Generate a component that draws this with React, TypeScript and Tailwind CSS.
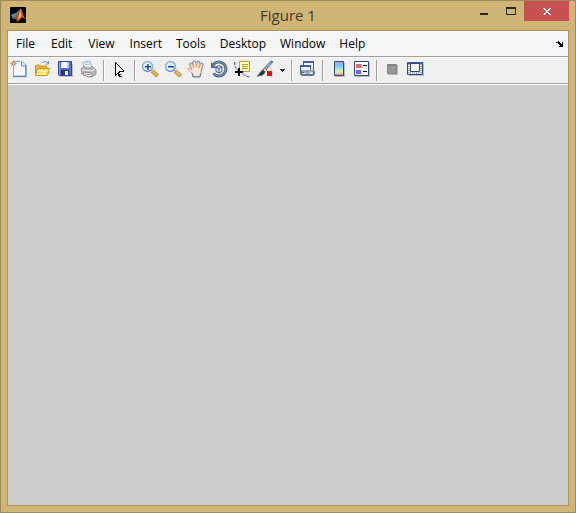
import type { ReactNode } from "react";

const menus = [
  { label: "File", padding: "px-2" },
  { label: "Edit", padding: "px-2" },
  { label: "View", padding: "px-2" },
  { label: "Insert", padding: "px-[7px]" },
  { label: "Tools", padding: "px-[7px]" },
  { label: "Desktop", padding: "px-[7px]" },
  { label: "Window", padding: "px-[7px]" },
  { label: "Help", padding: "px-[7px]" },
];

function Icon({ children }: { children: ReactNode }) {
  return (
    <svg viewBox="0 0 18 18" className="size-[18px] shrink-0" fill="none" aria-hidden="true">
      {children}
    </svg>
  );
}

function Tool({ label, disabled, children }: { label: string; disabled?: boolean; children: ReactNode }) {
  return (
    <button type="button" aria-label={label} title={label} disabled={disabled} className="flex h-6 w-[23px] shrink-0 items-start pt-0.5 pl-0.5">
      <Icon>{children}</Icon>
    </button>
  );
}

function Separator() {
  return (
    <div className="flex h-6 w-2 shrink-0 items-center justify-center">
      <div className="h-[21px] w-0.5 border-l border-[#a0a0a0] bg-white" />
    </div>
  );
}

function Logo() {
  return (
    <svg viewBox="0 0 16 16" className="size-4 shrink-0" aria-hidden="true">
      <rect width="16" height="16" fill="#000" />
      <path d="M1 8l4-2 3 3-3 2-1 1-2-2z" fill="#458fa6" />
      <path d="M5 6c2 0 3-2 5-4L8 8 7 10z" fill="#6d8186" />
      <path d="M4 12l3-4c1-1 2-4 3-6l1 1 1 5-2 3-3 4-1-3z" fill="#b84320" />
      <path d="M10 2h1c1 2 2 6 4 10l-3-2-2 2-3 3 2-6z" fill="#f07927" />
      <path d="M10 4l1 5-2 2-1 2 1-5z" fill="#ffc84a" />
      <path d="M11 4l3 7-2-2z" fill="#a62914" />
    </svg>
  );
}

function Magnifier({ plus }: { plus?: boolean }) {
  return (
    <>
      <path d="M11 11l5.500 5" stroke="#a8875f" strokeWidth="4" />
      <path d="M10.500 10.500l5.500 5" stroke="#f4b04c" strokeWidth="2.500" />
      <circle cx="6.500" cy="6.500" r="5" fill="#dff3fd" stroke="#8aafe0" strokeWidth="1.500" />
      <path d="M3 10a5 5 0 0 0 7.500-1" stroke="#638dcc" />
      <path d="M4 6h6v1.500H4z" fill="#204a96" />
      {plus && <path d="M6.200 4h1.500v6H6.200z" fill="#204a96" />}
    </>
  );
}

export default function App() {
  return (
    <main className="flex h-screen flex-col border border-[#9d8a5a] bg-[#cfb676] px-1.5 pb-1.5 font-['Open_Sans','Noto_Sans',sans-serif]">
      <header className="grid h-[29px] shrink-0 grid-cols-[1fr_auto_1fr] items-start">
        <div className="pt-1.5 pl-[3px]"><Logo /></div>
        <h1 className="pt-1 text-[15px] leading-5 text-[#40382d]">Figure 1</h1>
        <div className="flex justify-end">
          <button type="button" aria-label="Minimize" className="flex h-5 w-[27px] items-center justify-center">
            <svg viewBox="0 0 8 10" className="h-2.5 w-2" aria-hidden="true"><path d="M0 7h8v2H0z" fill="#252525" /></svg>
          </button>
          <button type="button" aria-label="Maximize" className="flex h-5 w-[27px] items-center justify-center">
            <svg viewBox="0 0 10 8" className="h-2 w-2.5" aria-hidden="true"><path d="M0 0h10v8H0zM1 2v5h8V2z" fill="#252525" fillRule="evenodd" /></svg>
          </button>
          <button type="button" aria-label="Close" className="flex h-5 w-[45px] items-center justify-center bg-[#c75050]">
            <svg viewBox="0 0 8 7" className="mt-px h-[7px] w-2" aria-hidden="true"><path d="M0 0h2v1h1v1h2V1h1V0h2v1H7v1H6v1H5v1h1v1h1v1h1v1H6V6H5V5H3v1H2v1H0V6h1V5h1V4h1V3H2V2H1V1H0z" fill="#fff" /></svg>
          </button>
        </div>
      </header>

      <section className="flex min-h-0 flex-1 flex-col border border-[#aa945b] bg-[#ccc]">
        <nav className="flex h-[25px] shrink-0 items-center bg-[#f5f6f7] text-xs leading-4 text-black">
          {menus.map(({ label, padding }) => (
            <button type="button" key={label} className={`h-6 ${padding}`}>{label}</button>
          ))}
          <button type="button" aria-label="Dock figure" className="mr-[3px] ml-auto flex h-6 w-2.5 items-center justify-center">
            <svg viewBox="0 0 8 6" className="h-1.5 w-2" aria-hidden="true"><path d="M0 1h2V0h1v1h1v1h1v1h1V1h1v5H3V5h1V4H3V3H2V2H0z" fill="#000" /></svg>
          </button>
        </nav>

        <div role="toolbar" aria-label="Figure toolbar" className="flex h-7 shrink-0 items-center border-y border-[#a0a0a0] bg-[#f0f0f0] shadow-[inset_0_1px_#fff,0_1px_#fff]">
          <Tool label="New figure">
            <path d="M4 2h9.500L17 5.500V17.500H4z" fill="#c5d0e0" />
            <path d="M3.500 1.500H12l3.500 3.500v11h-12z" fill="#f3f9ff" stroke="#8eabd8" />
            <path d="M11.500 2v4H15" fill="#d3e2f7" stroke="#7795c0" />
            <path d="M16 5v11.500H3" stroke="#6681ac" />
            <path d="M3.500 0v7M0 3.500h7M1 1l5 5M6 1L1 6" stroke="#e99a76" strokeWidth=".8" />
            <circle cx="3.500" cy="3.500" r="1.500" fill="#fff5c0" stroke="#dc653e" />
          </Tool>
          <Tool label="Open">
            <path d="M9 3c2-2 4-2 6 0M15.500 1v3h-3" stroke="#6f88b4" />
            <path d="M2.500 15V6l1-1h3l1 1h6v9z" fill="#e6b837" stroke="#c6921c" />
            <path d="M2.500 15.500l2-7H16.500l-2 7z" fill="#ffec97" stroke="#cd991a" />
            <path d="M5 9.500h10M5 12.500h9" stroke="#ffd95c" />
          </Tool>
          <Tool label="Save">
            <path d="M4 4h13v13H4z" fill="#bcc1d2" /><path d="M2.500 1.500h13v14h-12l-1-1z" fill="#5669cf" stroke="#3445a5" />
            <path d="M5 2h8v6H5z" fill="#f7faff" /><path d="M11 2h2v6h-2z" fill="#b8c8e8" />
            <path d="M5 10h8v5H5z" fill="#26366f" /><path d="M9 11h3v4H9z" fill="#eef2fa" />
            <path d="M3.500 2v12" stroke="#8d9ded" />
          </Tool>
          <Tool label="Print">
            <path d="M5 8L4 2l7-1 2 7z" fill="#eef6ff" stroke="#a3bad8" />
            <path d="M6 3l4-1M6 5l5-1" stroke="#a8c3e5" />
            <path d="M2 9l3-3 1 2h6l1-2 4 4v4l-4 3-10-3z" fill="#b5b7b9" stroke="#969696" />
            <path d="M3 10l10 1 3-2" stroke="#f1f1f1" /><path d="M5 12l7 1 2 3-4 1-6-2z" fill="#f5f5f5" stroke="#8e8e8e" /><path d="M6 14l6 1" stroke="#999" />
          </Tool>
          <Separator />
          <Tool label="Edit plot">
            <path d="M6 3v11l2-2h1v2h1v2h2v-2h-1v-2h-1v-1h3z" fill="#fff" />
            <path d="M5 2h1v1h1v1h1v1h1v1h1v1h1v1h1v1h1v1h1v2h-4v2h1v2h1v1H9v-1H8v-2H7v1H6v1H5zM6 4v10h1v-1h1v-1h1v2h1v2h1v-1h-1v-2H9v-2h4v-1h-1V9h-1V8h-1V7H9V6H8V5H7V4z" fill="#000" fillRule="evenodd" shapeRendering="crispEdges" />
          </Tool>
          <Separator />
          <Tool label="Zoom in"><Magnifier plus /></Tool>
          <Tool label="Zoom out"><Magnifier /></Tool>
          <Tool label="Pan">
            <path d="M6 16.500V14L1 9.500c-.5-1 .5-2 1.500-1.500L5 9.500 3 4.500c0-1 1.500-1.500 2-.5L7 8 6 2c0-1.500 2-1.500 2.500 0L9.500 7l1-5c.5-1.500 2-1 2 .5L12 8l2-4c1-1 2.500 0 2 1l-2 7.500-1 2v2z" fill="#ffe7d4" stroke="#d0a27d" />
            <path d="M3.500 7L2.500 4c0-1 1-1.500 2-1l1 1V2L7 .7 8.500 1l1 2 1-2 2 .500.500 2 2-.5 1 1.500-2 7" stroke="#6f88bd" strokeWidth=".8" />
            <path d="M5 13l1 4h7l1-4" stroke="#597cb9" />
          </Tool>
          <Tool label="Rotate 3D">
            <path d="M3.500 4.500a7 7 0 1 1 0 9" stroke="#526b8b" strokeWidth="3" />
            <path d="M3.500 4.500a7 7 0 1 1 0 9" stroke="#8198b7" />
            <path d="M1 2v6h6z" fill="#526b8b" />
            <path d="M6 7l3-1.500L12 7v4.500L9 13l-3-1.500z" fill="#e5effb" stroke="#405b85" />
            <path d="M6 7l3 1.500L12 7M9 8.500V13" stroke="#405b85" />
          </Tool>
          <Tool label="Data cursor">
            <path d="M1.500 2v3l2 4 3 3 3 1 3 3 4 1" stroke="#4a4af4" strokeDasharray="3 1" />
            <path d="M6.500 1.500h10v10h-10z" fill="#ffffb0" stroke="#a8a139" />
            <path d="M9 4.500h6M9 6.500h6M9 8.500h6" stroke="#aaa342" />
            <path d="M6 8v8M2 12h8" stroke="#000" strokeWidth="2" />
          </Tool>
          <Tool label="Brush data">
            <path d="M15.500 2L8 10" stroke="#667a9e" strokeWidth="3" strokeLinecap="round" />
            <path d="M15 2.500L8 9.500" stroke="#b7c9e1" />
            <path d="M9 8l2 2-3 3-2-2z" fill="#e8c491" stroke="#8b7961" strokeWidth=".7" />
            <path d="M7 10l2 2c-1 3-4 4-8 4 3-1 2-4 6-6z" fill="#27303b" stroke="#596b78" />
            <path d="M11 11h5v5h-5z" fill="#f00" />
          </Tool>
          <button type="button" aria-label="Brush options" className="flex h-6 w-[11px] shrink-0 items-center justify-center">
            <svg viewBox="0 0 5 3" className="h-[3px] w-[5px]" aria-hidden="true"><path d="M0 0h5v1H4v1H3v1H2V2H1V1H0z" fill="#333" /></svg>
          </button>
          <Separator />
          <Tool label="Link plots">
            <path d="M5.500 1.500h10v9h-10z" fill="#edf4ff" stroke="#4363a0" /><path d="M5 1h11v2H5z" fill="#415ca0" />
            <path d="M2.500 5.500h10v7h-10z" fill="#eef5ff" stroke="#4363a0" /><path d="M2 5h11v2H2z" fill="#415ca0" />
            <rect x="3" y="11" width="7" height="4" rx="2" stroke="#5f718a" strokeWidth="2" />
            <rect x="9" y="11" width="7" height="4" rx="2" stroke="#5f718a" strokeWidth="2" />
            <path d="M4 11h5M10 11h5M6 13h7" stroke="#d6e0ed" />
          </Tool>
          <Separator />
          <Tool label="Insert colorbar">
            <defs><linearGradient id="colorbar" x1="0" y1="0" x2="0" y2="1"><stop stopColor="#bd9cff" /><stop offset=".3" stopColor="#72c9ff" /><stop offset=".55" stopColor="#a0efd0" /><stop offset=".75" stopColor="#f9eda0" /><stop offset="1" stopColor="#f88b7b" /></linearGradient></defs>
            <path d="M6 3h10v14H6z" fill="#b8bec7" />
            <path d="M5.500 1.500h9v14h-9z" fill="url(#colorbar)" stroke="#304a7d" />
          </Tool>
          <Tool label="Insert legend">
            <path d="M3 3h15v14H3z" fill="#b8bec7" /><path d="M2.500 1.500h14v14h-14z" fill="#f9fbff" stroke="#304a7d" />
            <path d="M4 4h5v4H4z" fill="#e46464" /><path d="M4 10h5v4H4z" fill="#6868e5" /><path d="M11 5.500h4M11 11.500h4" stroke="#000" />
          </Tool>
          <Separator />
          <Tool label="Hide plot tools" disabled>
            <path d="M5 5h10v10H5z" fill="#bcbcbc" /><path d="M4.500 4.500h9v9h-9z" fill="#999" stroke="#858585" /><path d="M5 5.500h8" stroke="#808080" />
          </Tool>
          <Tool label="Show plot tools and dock figure">
            <path d="M3 3h15v13H3z" fill="#b8bec7" /><path d="M1.500 2.500h15v12h-15z" fill="#f4f6f8" stroke="#304a7d" /><path d="M1 2h16v2H1z" fill="#405ca0" />
            <path d="M3 4v10M15 4v10M4 13h10" stroke="#a2a9b2" strokeWidth="2" strokeDasharray="1 1" />
            <path d="M4.500 3.500h9v8h-9z" fill="#fff" stroke="#304a7d" /><path d="M4 3h10v1H4z" fill="#304a7d" />
          </Tool>
        </div>
        <div className="min-h-0 flex-1" role="img" aria-label="Empty figure" />
      </section>
    </main>
  );
}
